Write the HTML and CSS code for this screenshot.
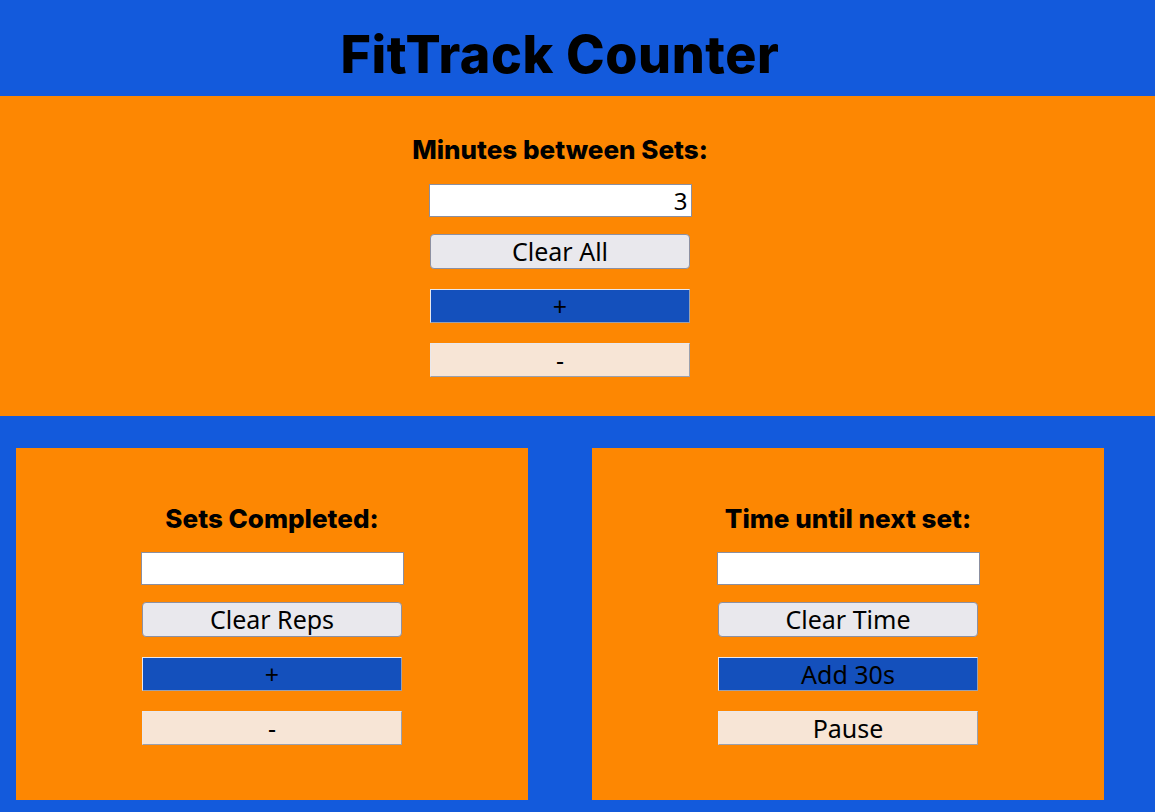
FILE: index.html
```html
<!DOCTYPE html>
<html lang="en">
<head>
<meta charset="utf-8">
<title>FitTrack Counter</title>
<link rel="stylesheet" href="styles.css">
</head>
<body>
<div class="page">
  <header class="header">
    <h1 class="title">FitTrack Counter</h1>
  </header>
  <section class="settings">
    <h2 class="label">Minutes between Sets:</h2>
    <input class="field field-right" type="text" value="3">
    <button class="btn btn-clear">Clear All</button>
    <button class="btn btn-plus">+</button>
    <button class="btn btn-minus">-</button>
  </section>
  <main class="cards">
    <section class="card">
      <h2 class="label">Sets Completed:</h2>
      <input class="field" type="text" value="">
      <button class="btn btn-clear">Clear Reps</button>
      <button class="btn btn-plus">+</button>
      <button class="btn btn-minus">-</button>
    </section>
    <section class="card">
      <h2 class="label">Time until next set:</h2>
      <input class="field" type="text" value="">
      <button class="btn btn-clear">Clear Time</button>
      <button class="btn btn-plus">Add 30s</button>
      <button class="btn btn-minus">Pause</button>
    </section>
  </main>
</div>
</body>
</html>
```
FILE: styles.css
```css
html, body {
  margin: 0;
  padding: 0;
}
body {
  background: #135adc;
  height: 812px;
  overflow: hidden;
  font-family: "Noto Sans", "Open Sans", sans-serif;
}
.page {
  width: 1120px;
}
.header {
  height: 96px;
  display: flex;
  align-items: center;
  justify-content: center;
}
.title {
  margin: 0;
  font-family: "Inter", "Noto Sans", sans-serif;
  font-weight: 800;
  font-size: 52px;
  letter-spacing: 0.6px;
  color: #000;
  line-height: 60px;
  padding-top: 14px;
}
.settings {
  background: #fd8702;
  width: 1155px;
  height: 320px;
  box-sizing: border-box;
  padding: 39px 35px 0 0;
  display: flex;
  flex-direction: column;
  align-items: center;
}
.label {
  margin: 0;
  font-family: "Inter", "Noto Sans", sans-serif;
  font-weight: 800;
  font-size: 26px;
  line-height: 30px;
  height: 30px;
  color: #000;
}
.field {
  margin-top: 19px;
  width: 263px;
  height: 33px;
  box-sizing: border-box;
  border: 1px solid #8b8fa0;
  background: #fff;
  font-family: "Noto Sans", sans-serif;
  font-size: 24px;
  padding: 0 3px;
  color: #000;
  outline: none;
}
.field-right {
  text-align: right;
}
.btn {
  width: 260px;
  box-sizing: border-box;
  font-family: "Noto Sans", sans-serif;
  font-size: 25px;
  color: #000;
  padding: 0;
  line-height: 1;
}
.btn-clear {
  margin-top: 17px;
  height: 35px;
  background: #e9e8ed;
  border: 1px solid #8d90a2;
  border-radius: 4px;
}
.btn-plus {
  margin-top: 20px;
  height: 34px;
  background: #1450bc;
  border: 1px solid;
  border-color: #e8e8ee #9aa0ae #9aa0ae #e8e8ee;
}
.btn-minus {
  margin-top: 20px;
  height: 34px;
  background: #f7e5d6;
  border: 1px solid;
  border-color: #e8e8ee #9aa0ae #9aa0ae #e8e8ee;
}
.cards {
  display: flex;
  gap: 64px;
  padding: 32px 0 0 16px;
}
.card {
  width: 512px;
  height: 352px;
  flex: none;
  box-sizing: border-box;
  background: #fd8702;
  padding-top: 56px;
  display: flex;
  flex-direction: column;
  align-items: center;
}
.card .field {
  margin-top: 18px;
}
```
